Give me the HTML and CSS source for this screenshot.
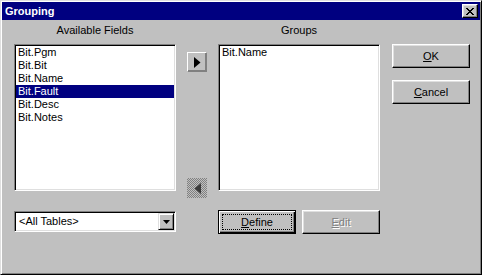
FILE: index.html
```html
<!DOCTYPE html>
<html lang="en">
<head>
    <meta charset="UTF-8">
    <meta name="viewport" content="width=device-width, initial-scale=1.0">
    <title>Grouping</title>
    <link rel="stylesheet" href="styles.css">
</head>
<body>
    <div class="window">
        <div class="titlebar">
            <span class="title">Grouping</span>
            <button class="close-btn" aria-label="Close">
                <svg width="8" height="7" viewBox="0 0 8 7">
                    <path d="M0 0h2v1h1v1h2v-1h1v-1h2v1h-1v1h-1v1h-1v1h1v1h1v1h1v1h-2v-1h-1v-1h-2v1h-1v1h-2v-1h1v-1h1v-1h1v-1h-1v-1h-1v-1h-1z" fill="#000"/>
                </svg>
            </button>
        </div>

        <div class="dialog">
            <div class="field-label col-1">Available Fields</div>
            <div class="field-label col-3">Groups</div>

            <ul class="listbox col-1">
                <li>Bit.Pgm</li>
                <li>Bit.Bit</li>
                <li>Bit.Name</li>
                <li class="selected">Bit.Fault</li>
                <li>Bit.Desc</li>
                <li>Bit.Notes</li>
            </ul>

            <div class="movers">
                <button class="arrow-btn">
                    <svg width="7" height="11" viewBox="0 0 7 11"><path d="M0 0L6.5 5.5L0 11z" fill="#000"/></svg>
                </button>
                <button class="arrow-btn disabled">
                    <svg width="7" height="11" viewBox="0 0 7 11"><path d="M7 0L0.5 5.5L7 11z" fill="#3a3a3a"/></svg>
                </button>
            </div>

            <ul class="listbox col-3">
                <li>Bit.Name</li>
            </ul>

            <div class="actions">
                <button class="btn"><u>O</u>K</button>
                <button class="btn"><u>C</u>ancel</button>
            </div>

            <div class="combo col-1">
                <span class="combo-text">&lt;All Tables&gt;</span>
                <span class="combo-drop">
                    <svg width="7" height="4" viewBox="0 0 7 4"><path d="M0 0h7L3.5 4z" fill="#000"/></svg>
                </span>
            </div>

            <div class="group-buttons col-3">
                <button class="btn default"><span class="focus"><u>D</u>efine</span></button>
                <button class="btn disabled"><u>E</u>dit</button>
            </div>
        </div>
    </div>
</body>
</html>
```

FILE: styles.css
```css
body {
    margin: 0;
    background-color: #c0c0c0;
    font-family: "Liberation Sans", Arial, sans-serif;
    font-size: 11px;
    color: #000;
}

.window {
    width: 482px;
    height: 275px;
    box-sizing: border-box;
    padding: 1px;
    background-color: #c0c0c0;
    border: 1px solid;
    border-color: #dfdfdf #000 #000 #dfdfdf;
    box-shadow: inset 1px 1px #fff, inset -1px -1px #808080;
}

.titlebar {
    height: 18px;
    background-color: #000080;
    display: flex;
    align-items: center;
    justify-content: space-between;
    padding: 0 2px 0 3px;
}

.title {
    color: #fff;
    font-weight: bold;
    font-size: 11px;
    line-height: 13px;
}

.close-btn,
.btn,
.arrow-btn {
    font-family: inherit;
    font-size: 11px;
    color: #000;
    background-color: #c0c0c0;
    border: 1px solid;
    border-color: #fff #000 #000 #fff;
    box-shadow: inset -1px -1px #808080, inset 1px 1px #dfdfdf;
    padding: 0;
    box-sizing: border-box;
    display: flex;
    align-items: center;
    justify-content: center;
}

.close-btn {
    width: 16px;
    height: 14px;
}

.close-btn svg {
    margin-right: 1px;
}

.dialog {
    display: grid;
    grid-template-columns: 162px 20px 162px 78px;
    grid-template-rows: 20px 166px 24px;
    column-gap: 11px;
    padding: 4px 0 0 12px;
}

.col-1 { grid-column: 1; }
.col-3 { grid-column: 3; }

.field-label {
    grid-row: 1;
    text-align: center;
    line-height: 13px;
}

.listbox {
    grid-row: 2;
    height: 147px;
    margin: 0;
    padding: 0;
    list-style: none;
    background-color: #fff;
    box-sizing: border-box;
    border: 1px solid;
    border-color: #808080 #fff #fff #808080;
    box-shadow: inset 1px 1px #000, inset -1px -1px #dfdfdf;
    padding: 1px;
}

.listbox li {
    height: 13px;
    line-height: 13px;
    padding-left: 2px;
    white-space: nowrap;
}

.listbox li.selected {
    background-color: #000080;
    color: #fff;
}

.movers {
    grid-column: 2;
    grid-row: 2;
    display: flex;
    flex-direction: column;
    justify-content: space-between;
    padding: 8px 0 12px;
}

.arrow-btn {
    width: 20px;
    height: 20px;
    border-color: #fff #808080 #808080 #fff;
    box-shadow: inset -1px -1px #808080;
}

.arrow-btn svg {
    margin-left: 1px;
}

.arrow-btn.disabled {
    border: none;
    box-shadow: none;
    background: repeating-conic-gradient(#808080 0 25%, #c0c0c0 0 50%) 0 0 / 2px 2px;
}

.actions {
    grid-column: 4;
    grid-row: 2;
    margin-left: 1px;
    display: flex;
    flex-direction: column;
    gap: 12px;
}

.btn {
    width: 78px;
    height: 24px;
}

.combo {
    grid-row: 3;
    height: 21px;
    margin-top: 1px;
    box-sizing: border-box;
    background-color: #fff;
    border: 1px solid;
    border-color: #808080 #fff #fff #808080;
    box-shadow: inset 1px 1px #000, inset -1px -1px #dfdfdf;
    padding: 2px 2px 2px 2px;
    display: flex;
    align-items: center;
}

.combo-text {
    flex: 1;
    padding-left: 2px;
    line-height: 13px;
}

.combo-drop {
    width: 16px;
    height: 17px;
    margin-right: -1px;
    box-sizing: border-box;
    background-color: #c0c0c0;
    border: 1px solid;
    border-color: #dfdfdf #000 #000 #dfdfdf;
    box-shadow: inset 1px 1px #fff, inset -1px -1px #808080;
    display: flex;
    align-items: center;
    justify-content: center;
}

.group-buttons {
    grid-row: 3;
    display: flex;
    gap: 6px;
}

.btn.default {
    border: 1px solid #000;
    box-shadow: inset 1px 1px #fff, inset -1px -1px #000, inset -2px -2px #808080;
    padding: 3px;
}

.btn.default .focus {
    width: 100%;
    height: 100%;
    box-sizing: border-box;
    border: 1px dotted #000;
    display: flex;
    align-items: center;
    justify-content: center;
}

.btn.disabled {
    color: #808080;
    text-shadow: 1px 1px #fff;
}
```
